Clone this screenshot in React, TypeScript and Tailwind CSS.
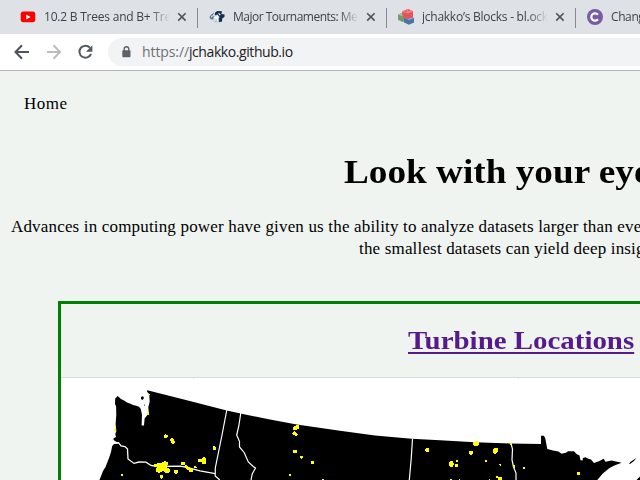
import React from "react";

const sans = "font-['Open_Sans','Noto_Sans',sans-serif]";
const serif = "font-['Liberation_Serif',serif]";

function YouTubeIcon() {
  return (
    <svg width="16" height="16" viewBox="0 0 16 16" className="shrink-0">
      <rect x="0.7" y="2.6" width="14.6" height="10.6" rx="2.6" fill="#f00" />
      <path d="M6.3 5.5 10.5 8 6.3 10.4Z" fill="#fff" />
    </svg>
  );
}

function TournamentIcon() {
  return (
    <svg width="16" height="16" viewBox="0 0 16 16" className="shrink-0">
      <path d="M6.2 3.4 8.2 2.1 13 2.3 12.4 5 15.6 5.6 15.4 8 13.2 9.6 13 12.4 10.2 13.2 9.6 9 5.6 5.6Z" fill="#14304d" />
      <path d="M5.2 3.5 2.4 5.4.4 8l1.4 2.2L4 10.4 5 7.3 3.6 6.4Z" fill="#487197" />
      <path d="M1.9 7.2 3.4 6l.5 1.4-1.5 1.3Z" fill="#dfe9f1" />
      <path d="M8.2 5.6 10.6 8.2 9.4 9v4H7.8v-2.4H6.6V13H5l.2-4-1-.8Z" fill="#fff" stroke="#7593ad" strokeWidth="0.4" />
      <path d="M9.6 4.4 11.3 6.2" stroke="#fff" strokeWidth="1.1" />
    </svg>
  );
}

function BlocksIcon() {
  return (
    <svg width="18" height="18" viewBox="0 0 18 18" className="-ml-px shrink-0">
      <path d="M1 6.5 5 5l5 2v5.4L5.5 14 1 11.7Z" fill="#6f9d6d" />
      <path d="M1 6.5 5 5l5 2-4.5 1.5Z" fill="#a3c89e" />
      <path d="M7 9.5 12.5 8l4.5 2v4.5L12 16.7 7 14.5Z" fill="#4874aa" />
      <path d="M7 9.5 12.5 8l4.5 2-5 2Z" fill="#91b4df" />
      <path d="M5 3.4 10.7 1 16 3.2v6L11 11.2 5.6 9Z" fill="#e4555a" />
      <path d="M5 3.4 10.7 1 16 3.2l-5 2.2Z" fill="#fa8181" />
      <path d="M8 3.2h2m1-1h2" stroke="#d94a52" />
    </svg>
  );
}

function ChangeIcon() {
  return (
    <svg width="16" height="16" viewBox="0 0 16 16" className="shrink-0">
      <circle cx="8" cy="8" r="8" fill="#785aa6" />
      <path d="M10.9 5.7A3.7 3.7 0 1 0 10.9 10.3" fill="none" stroke="#fff" strokeWidth="2.2" />
    </svg>
  );
}

function Tab({ icon, title, tracking }: { icon: React.ReactNode; title: string; tracking: string }) {
  return (
    <div className="flex h-full w-[189px] shrink-0 items-center">
      <div className="flex w-6 shrink-0 justify-start">{icon}</div>
      <div className={`w-[127px] overflow-hidden whitespace-nowrap text-[12px] leading-4 text-[#3f4347] ${tracking} [mask-image:linear-gradient(to_right,black_84%,transparent_99%)]`}>
        {title}
      </div>
      <svg width="10" height="10" viewBox="0 0 10 10" className="ml-[6px] shrink-0">
        <path d="m1.2 1.2 7.4 7.4m0-7.4L1.2 8.6" stroke="#4f5358" strokeWidth="1.6" />
      </svg>
      <div className="ml-[10px] mt-px h-5 w-px bg-[#858a90]" />
    </div>
  );
}

const turbines: [number, number, number, number][] = [
  [149, 394.5, 1, 1], [148, 413.5, 1, 1.3], [115.3, 429.8, 1.2, 1.4],
  [165.7, 436.2, 2.2, 1.9], [172, 440, 1.9, 1.8], [173, 442, 1.9, 2],
  [214.3, 448.2, 1.8, 2.1], [200.2, 460.5, 2.2, 2], [204.2, 459.6, 2.3, 2.5], [204, 462, 2.4, 2],
  [155.6, 465.4, 2.4, 1.7], [159.4, 465.3, 3.4, 2.2], [165, 464, 2.9, 2.7],
  [159, 469.8, 3, 2.9], [163.2, 468, 3.5, 3.5], [167, 470.7, 2.7, 2.8],
  [161.5, 476.9, 1.8, 1.9], [175.8, 471.8, 2, 2], [177.3, 470.7, 1.2, 1.2],
  [183, 463.7, 2, 1.8], [186, 466.4, 1.8, 1.6], [188.5, 468.5, 2.2, 2], [191, 470.5, 2, 1.9],
  [195.3, 467.3, 1.3, 1.2], [121.8, 475, 1, 1],
  [295, 428.1, 2.3, 1.9], [297.5, 426.9, 2, 2], [294.3, 433.2, 2, 1.9], [296, 434.5, 1.7, 1.7],
  [295, 451.5, 1.9, 1.7], [301.5, 457.3, 1.6, 1.4], [312.5, 462.5, 1.7, 1.7],
  [290.2, 475.1, 1, 1], [323, 479.5, 1.4, 0.8],
  [427.3, 450, 2.2, 2.5], [476.2, 443.7, 3, 2.4], [471, 452.7, 2.4, 2.2],
  [494.8, 451, 2.3, 2.8], [496.6, 450, 1.8, 2.5], [451.3, 464, 2.3, 2.9],
  [457, 461.2, 1.6, 1.4], [456.5, 465.5, 1.8, 2], [486.3, 460.7, 1.2, 1.1],
  [500.3, 464.6, 1.2, 1.1], [511, 443.7, 1, 1], [514, 466.5, 1.2, 1.2],
  [524, 467.8, 1.2, 1.1], [578.8, 473.5, 1.6, 1.8], [497.2, 477, 1.2, 1.1],
  [500, 479, 2.3, 2.2], [489.5, 479.6, 1, 0.7], [451, 479.5, 1.3, 0.7], [459.5, 479.6, 0.8, 0.7],
];

function TurbineMap() {
  return (
    <svg width="579" height="102" viewBox="61 378 579 102" className="block">
      <path
        d="M99.5 480 103 471 105.5 467 109 458 111 452 112.2 446 114 444 119 443.5 113.5 440 113.6 438.2 116 437 115.3 434 116.4 431 115.6 424 116.3 415 116.1 406.5 115 404 115.2 398.5 117.7 396 121 399 124 400.5 127 402.5 130.5 403.7 133 405 136.3 405.7 139 406.8 140.8 409 142 415 141.6 425.6 144 425.6 144.6 418.5 147 415.5 148.7 411.5 148.3 407 149.7 401.7 149.2 394 147 391.7 147.3 390.2 180 398.5 226.7 410.4 241.7 413.7 270 419.6 296.7 424.4 340 430.8 375 435.4 411.7 438.8 440 440.3 475 442.2 510 443.6 541 444V435.8L543.8 435.8 545.2 438 547.3 449.1 553 450.6 558.5 451.4 561.5 453.8 566 452.8 568 451.3 574 451.2 576.5 454 579.5 455.6 580.5 460.2 582.5 460.5 583 458 585.5 457.2 588.2 458.8 591 459.6 594 463 599 461.3 602.2 459.5 603.7 458.7 605.5 461.8 611.5 460.5 617 461.7 621.7 462.8 615 465.2 609.5 468 602.8 473.5 597.3 480Z"
        fill="#000"
      />
      <path d="M141 397 143 396.3 144 398 142.6 400 141 399ZM144 404.3l1 .8-.8 1ZM629 463.5 631 461.5 636.5 458.1 634 461 630 464ZM636.5 480 640 476.5V480Z" fill="#000" />
      <path
        d="M113 443 118.5 442.7 121 446 125 446.5 127.5 449 128 459 134 463.4 139 462 146 462.2 151 465.5 157 466.5 180 466.2 188 467.7 200 470.8 215.2 473.6"
        fill="none"
        stroke="#fff"
        strokeWidth="1.3"
      />
      <path
        d="M226.8 410 222 435 215.3 468 215.2 476 219.8 480M240.8 413 238.8 426 236.7 435 239.5 441.5 239.5 447 244.3 452.7 248.3 462 253.5 466.8 255.5 468 252.2 474 251 480M412.5 438.8 411.2 459 409.3 480M511 443.5 512.5 449 512 460 513.5 467 516 473 516 480"
        fill="none"
        stroke="#fff"
        strokeWidth="1.2"
      />
      {turbines.map(([cx, cy, rx, ry], i) => (
        <ellipse key={i} cx={cx} cy={cy} rx={rx} ry={ry} fill="#ff0" shapeRendering="crispEdges" />
      ))}
      <path d="M193 378h1M518 378h1" stroke="#888" strokeWidth="0.6" />
    </svg>
  );
}

function Toolbar() {
  return (
    <div className="flex h-9 items-center bg-white">
      <svg width="108" height="36" viewBox="0 34 108 36" className="shrink-0" fill="none" strokeWidth="2">
        <path d="M29 52H16M22 45.3 15.5 52l6.5 6.7" stroke="#505459" />
        <path d="M47 52h13M53.5 45.3 60 52l-6.5 6.7" stroke="#babcbe" />
        <path d="M91 54a6 6 0 1 1-1-6.3" stroke="#55595e" />
        <path d="M92.4 45.2v6.5h-6.5Z" fill="#55595e" />
      </svg>
      <div className="flex h-7 flex-1 items-center rounded-l-full bg-[#f1f3f4] pl-[14px]">
        <svg width="9" height="12" viewBox="0 0 9 12" className="mb-px shrink-0">
          <path d="M2.2 5V3a2.3 2.3 0 0 1 4.6 0v2" fill="none" stroke="#5f6368" strokeWidth="1.4" />
          <rect x="0.3" y="4.3" width="8.2" height="7" rx="1" fill="#5f6368" />
        </svg>
        <span className={`${sans} ml-[11px] whitespace-nowrap text-[14px] leading-5 text-[#202124]`}>
          <span className="tracking-[-0.1px] text-[#6d7176]">https://</span>
          <span className="tracking-[-0.42px]">jchakko.github.io</span>
        </span>
      </div>
    </div>
  );
}

export default function App() {
  return (
    <div className="flex h-[480px] w-[640px] flex-col overflow-hidden bg-[#eff4f0]">
      <div className={`${sans} flex h-[34px] shrink-0 overflow-hidden bg-[#dee1e6] pl-5`}>
        <Tab icon={<YouTubeIcon />} title="10.2 B Trees and B+ Tree" tracking="tracking-[-0.22px]" />
        <Tab icon={<TournamentIcon />} title="Major Tournaments: Me" tracking="tracking-[-0.5px]" />
        <Tab icon={<BlocksIcon />} title="jchakko’s Blocks - bl.ock" tracking="tracking-[-0.25px]" />
        <Tab icon={<ChangeIcon />} title="Change" tracking="tracking-[-0.4px]" />
      </div>
      <Toolbar />
      <div className="h-px shrink-0 bg-[#b6b4b8]" />
      <main className={`${serif} flex flex-1 flex-col text-black`}>
        <nav className="ml-6 mt-[22px] text-[17px] leading-[22px] tracking-[0.5px]">Home</nav>
        <h1 className="ml-[344px] mt-[37px] w-max origin-left scale-x-[1.095] whitespace-nowrap text-[34px] font-bold leading-10">Look with your eyes</h1>
        <p className="ml-[11px] mt-6 whitespace-nowrap text-[17px] leading-[22px] tracking-[0.17px]">
          Advances in computing power have given us the ability to analyze datasets larger than ever
          <br />
          <span className="ml-[348px]">the smallest datasets can yield deep insights</span>
        </p>
        <section className="ml-[58px] mt-[41px] w-[600px] shrink-0 border-[3px] border-b-0 border-[#008000]">
          <h2 className="flex h-[73px] items-center pl-[347px] text-[25px] font-bold leading-8 text-[#551a8b]">
            <a className="inline-block origin-left scale-x-[1.156] whitespace-nowrap underline decoration-2 underline-offset-[3px]">Turbine Locations</a>
          </h2>
          <div className="border-t border-[#dadddb] bg-white">
            <TurbineMap />
          </div>
        </section>
      </main>
    </div>
  );
}
